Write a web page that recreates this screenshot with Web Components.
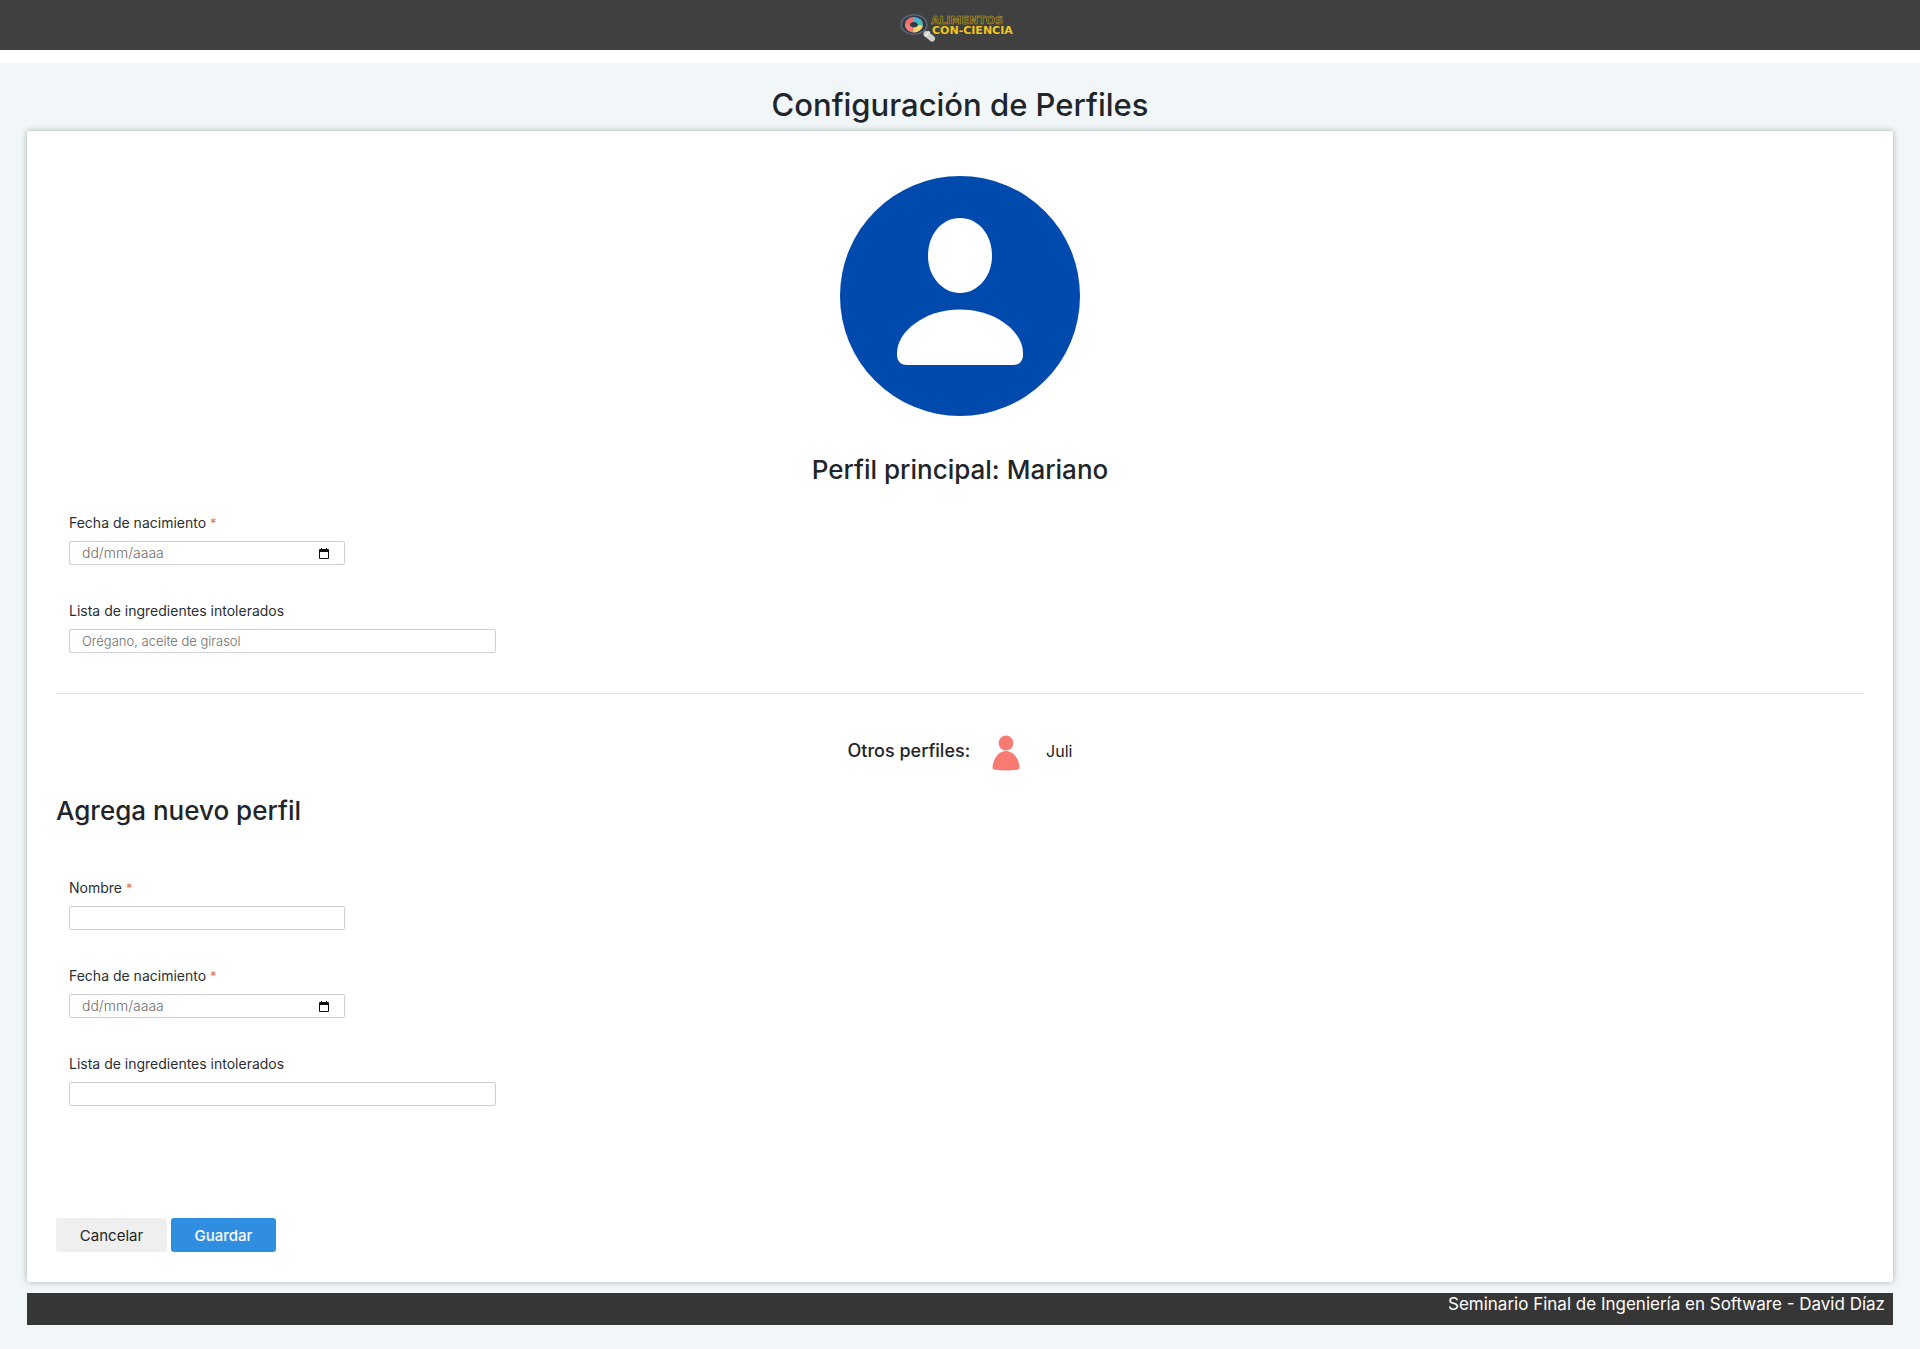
<!DOCTYPE html>
<html lang="es">
<head>
<meta charset="utf-8">
<meta name="viewport" content="width=device-width, initial-scale=1">
<title>Configuración de Perfiles</title>
<style>
  body { margin: 0; background: #f1f7f9; color: #212529; font-family: Inter, "Open Sans", sans-serif; }
</style>
</head>
<body>
<profiles-page></profiles-page>

<script>
const define = (name, html, setup) => {
  const template = document.createElement('template');
  template.innerHTML = html;
  customElements.define(name, class extends HTMLElement {
    connectedCallback() {
      if (this.shadowRoot) return;
      this.attachShadow({ mode: 'open' }).append(template.content.cloneNode(true));
      if (setup) setup(this, this.shadowRoot);
    }
  });
};

define('brand-logo', `
  <style>
    :host { display: block; }
    svg { display: block; width: 124px; height: 36px; }
    text { font-family: "DejaVu Sans", sans-serif; font-weight: bold; font-size: 11px; }
    .outline { fill: #4a4526; stroke: #b99d2c; stroke-width: .6; }
    .solid { fill: #f0c61c; }
  </style>
  <svg viewBox="0 0 124 36" role="img" aria-label="Alimentos Con-Ciencia">
    <path d="M24 23 L29 27" stroke="#4d5868" stroke-width="3"/>
    <path d="M28.500 27 L34 31.500" stroke="#cfcfcf" stroke-width="6" stroke-linecap="round"/>
    <path d="M27 29.500 L31.500 24.500" stroke="#e9e9e9" stroke-width="2"/>
    <ellipse cx="16" cy="17.500" rx="12.800" ry="9.800" fill="#343a45" stroke="#596578" stroke-width="1.600"/>
    <g fill="none" stroke-width="5">
      <path d="M16 12.500 A6.500 5.200 0 0 0 9.500 18.500" stroke="#f36f6c"/>
      <path d="M9.500 17.500 A6.500 5.200 0 0 0 16.500 22.900" stroke="#f4817a"/>
      <path d="M15.500 22.900 A6.500 5.200 0 0 0 22.500 17.700" stroke="#f5d777"/>
      <path d="M22.500 18.200 A6.500 5.200 0 0 0 20.500 14" stroke="#54b9a6"/>
      <path d="M21 14.500 A6.500 5.200 0 0 0 15.800 12.500" stroke="#45b6d6"/>
    </g>
    <text class="outline" x="33" y="17">ALIMENTOS</text>
    <text class="solid" x="34" y="27">CON-CIENCIA</text>
  </svg>`);

define('site-header', `
  <style>
    :host { display: block; background: #fff; padding-bottom: 13px; }
    header { display: flex; justify-content: center; align-items: center; height: 50px; background: #404040; }
  </style>
  <header><slot></slot></header>`);

define('main-avatar', `
  <style>
    :host { display: block; }
    svg { display: block; width: 240px; height: 240px; }
  </style>
  <svg viewBox="0 0 240 240" role="img" aria-label="Perfil principal">
    <circle cx="120" cy="120" r="120" fill="#004aad"/>
    <path fill="#fff" d="M120 42 C138 42 152 58 152 80 C152 101 137 117 120 117 C103 117 88 101 88 80 C88 58 102 42 120 42Z"/>
    <path fill="#fff" d="M120 133.500 C156 133.500 183 156 183 177 V180 Q182 189 173 189 H67 Q58 189 57 180 V177 C57 156 84 133.500 120 133.500Z"/>
  </svg>`);

define('mini-avatar', `
  <style>
    :host { display: block; }
    svg { display: block; width: 28px; height: 36px; }
  </style>
  <svg viewBox="0 0 28 36" aria-hidden="true" fill="#f77b72">
    <circle cx="14" cy="8" r="7.400"/>
    <path d="M14 16 C22 16 27.500 25 27.500 33 Q27.500 34.500 25 34.800 Q14 36 3 34.800 Q.5 34.500 .5 33 C.5 25 6 16 14 16Z"/>
  </svg>`);

define('form-field', `
  <style>
    :host { display: flex; flex-direction: column; gap: 8px; width: 276px; max-width: 100%; font-size: 14px; }
    :host([wide]) { width: 427px; }
    label { line-height: 20px; color: #2b2f33; }
    i { font-style: normal; font-size: 13px; color: #e66a6a; }
    .box { display: flex; align-items: center; box-sizing: border-box; height: 24px; padding: 0 12px; border: 1px solid #ced0d2; border-radius: 2px; background: #fff; }
    input { flex: 1; min-width: 0; padding: 0; border: 0; outline: 0; background: none; font: inherit; font-size: 13px; font-weight: 300; line-height: 20px; color: #212529; }
    :host([date]) input { font-size: 14px; }
    input::placeholder { color: #6c6c6c; opacity: 1; }
    button { display: flex; padding: 0 3px; border: 0; background: none; color: #111; }
    svg { width: 10px; height: 11px; }
    [hidden] { display: none; }
  </style>
  <label for="control"><slot></slot> <i hidden>*</i></label>
  <div class="box">
    <input id="control" type="text">
    <button type="button" aria-label="Abrir calendario" hidden>
      <svg viewBox="0 0 10 11"><path fill="currentColor" d="M1 1h1V0h1v1h4V0h1v1h1q1 0 1 1v8q0 1-1 1H1q-1 0-1-1V2q0-1 1-1zM1 4v6h8V4z"/></svg>
    </button>
  </div>`, (host, root) => {
    root.querySelector('input').placeholder = host.getAttribute('placeholder') || '';
    root.querySelector('i').hidden = !host.hasAttribute('required');
    root.querySelector('input').required = host.hasAttribute('required');
    root.querySelector('button').hidden = !host.hasAttribute('date');
  });

define('action-button', `
  <style>
    :host { display: block; }
    button { display: block; height: 34px; min-width: 111px; padding: 0 22px; border: 0; border-radius: 3px; background: #efefef; color: #212529; font: inherit; font-size: 15px; }
    :host([primary]) button { min-width: 105px; background: #308ee0; color: #fff; font-weight: 500; }
  </style>
  <button type="button"><slot></slot></button>`);

define('other-profiles', `
  <style>
    :host { display: flex; justify-content: center; align-items: center; gap: 22px; height: 36px; line-height: 24px; }
    h3 { margin: 0; padding-bottom: 4px; font-size: 18px; font-weight: 500; }
    .name { padding: 0 0 4px 4px; font-size: 16px; }
  </style>
  <h3>Otros perfiles:</h3>
  <mini-avatar></mini-avatar>
  <span class="name"><slot></slot></span>`);

define('settings-card', `
  <style>
    :host { display: block; padding: 45px 29px 30px; border-radius: 3px; background: #fff; box-shadow: 0 0 6px rgba(0, 0, 0, .3); }
    .profile { display: flex; flex-direction: column; align-items: center; gap: 34px; }
    h2 { margin: 0; font-size: 26px; font-weight: 500; line-height: 40px; }
    .fields { display: flex; flex-direction: column; gap: 36px; padding: 23px 13px 40px; }
    hr { margin: 0 0 41px; border: 0; border-top: 1px solid #e4e4e4; }
    .new { padding-top: 20px; }
    .new + .fields { padding: 47px 13px 112px; }
    .actions { display: flex; gap: 4px; }
  </style>
  <div class="profile">
    <main-avatar></main-avatar>
    <h2>Perfil principal: Mariano</h2>
  </div>
  <div class="fields">
    <form-field date required placeholder="dd/mm/aaaa">Fecha de nacimiento</form-field>
    <form-field wide placeholder="Orégano, aceite de girasol">Lista de ingredientes intolerados</form-field>
  </div>
  <hr>
  <other-profiles>Juli</other-profiles>
  <h2 class="new">Agrega nuevo perfil</h2>
  <div class="fields">
    <form-field required>Nombre</form-field>
    <form-field date required placeholder="dd/mm/aaaa">Fecha de nacimiento</form-field>
    <form-field wide>Lista de ingredientes intolerados</form-field>
  </div>
  <div class="actions">
    <action-button>Cancelar</action-button>
    <action-button primary>Guardar</action-button>
  </div>`);

define('site-footer', `
  <style>
    :host { display: block; }
    footer { height: 32px; padding: 0 8px; background: #363636; color: #fff; text-align: right; font-size: 17px; line-height: 22px; }
  </style>
  <footer><slot></slot></footer>`);

define('profiles-page', `
  <style>
    :host { display: block; }
    main { padding: 22px 27px 11px; }
    h1 { margin: 0 0 6px; font-size: 31px; font-weight: 500; line-height: 40px; text-align: center; }
    .foot { padding: 0 27px 24px; }
  </style>
  <site-header><brand-logo></brand-logo></site-header>
  <main>
    <h1>Configuración de Perfiles</h1>
    <settings-card></settings-card>
  </main>
  <div class="foot"><site-footer>Seminario Final de Ingeniería en Software - David Díaz</site-footer></div>`);
</script>
</body>
</html>
